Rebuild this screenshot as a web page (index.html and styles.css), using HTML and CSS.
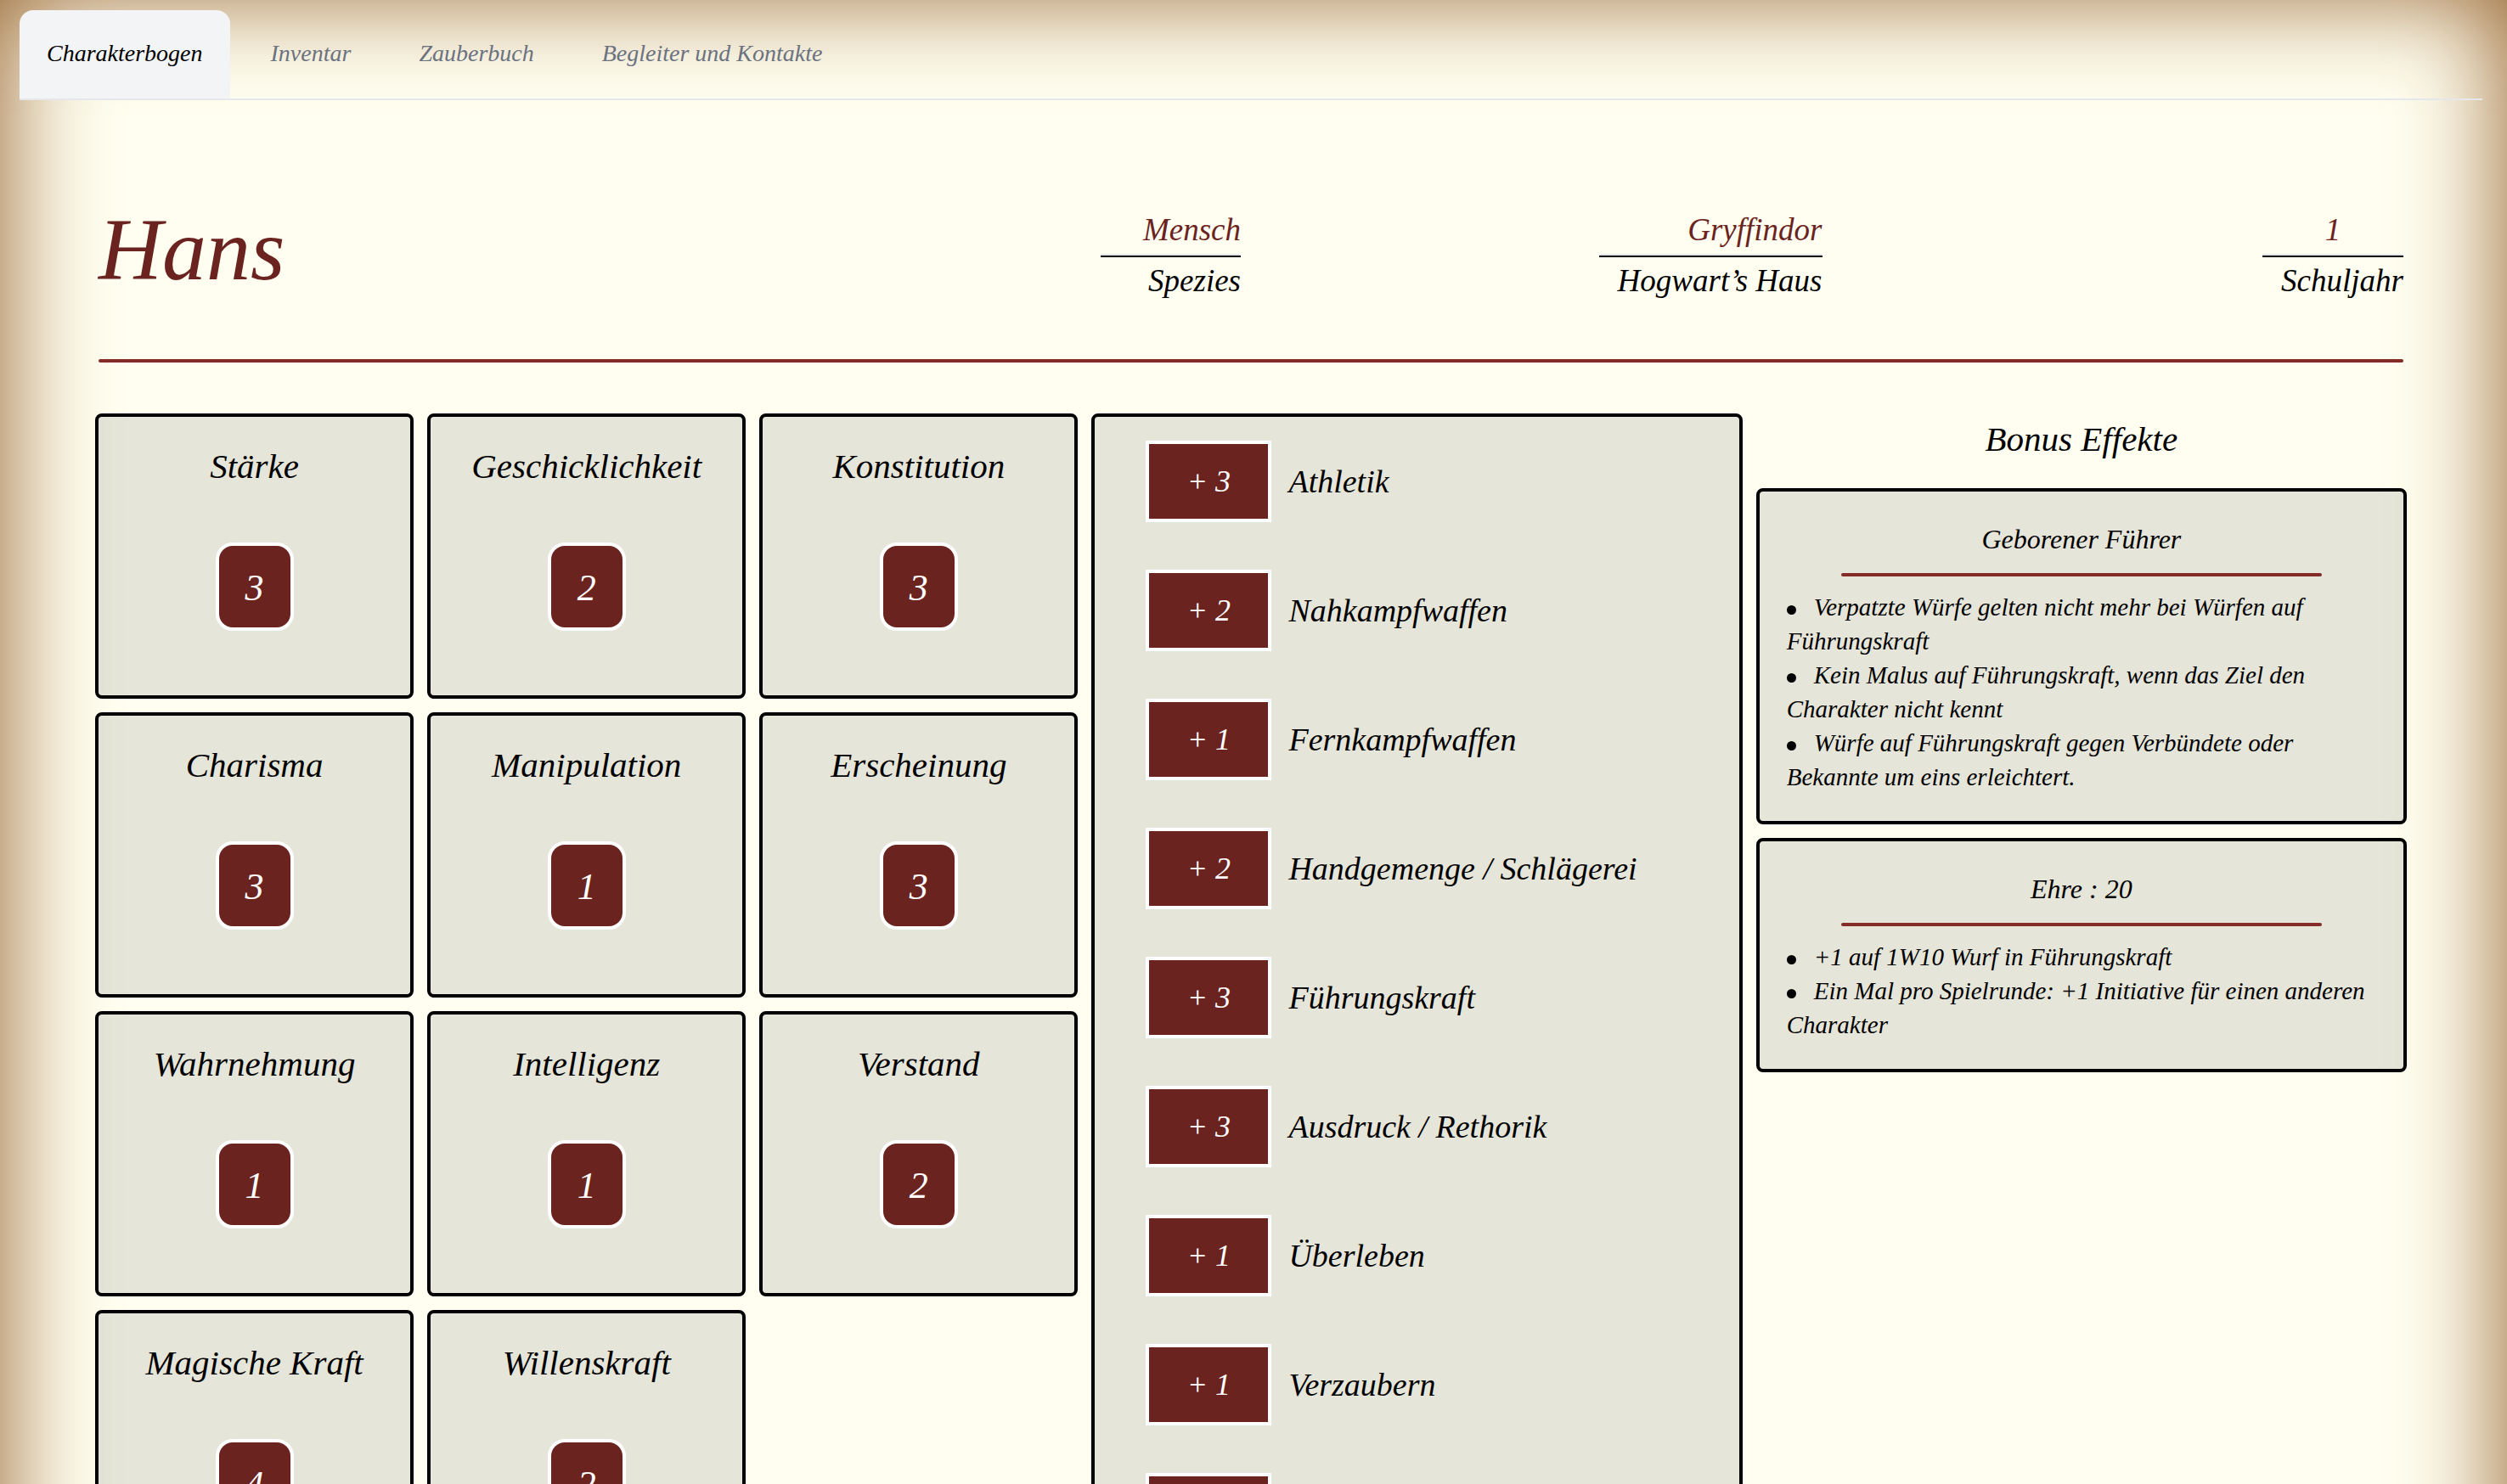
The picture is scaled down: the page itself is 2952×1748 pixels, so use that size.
FILE: index.html
```html
<!DOCTYPE html>
<html lang="de">
<head>
<meta charset="utf-8">
<meta name="viewport" content="width=device-width, initial-scale=1">
<title>Charakterbogen – Hans</title>
<link rel="stylesheet" href="styles.css">
</head>
<body>
<div class="parchment">
  <nav class="tabs">
    <a class="tab tab-active" href="#charakterbogen" aria-current="page">Charakterbogen</a>
    <a class="tab" href="#inventar">Inventar</a>
    <a class="tab" href="#zauberbuch">Zauberbuch</a>
    <a class="tab" href="#kontakte">Begleiter und Kontakte</a>
  </nav>
  <main class="sheet">
    <header class="profile">
      <h1 class="name">Hans</h1>
      <div class="fact"><span class="fact-value">Mensch</span><span class="fact-label">Spezies</span></div>
      <div class="fact"><span class="fact-value">Gryffindor</span><span class="fact-label">Hogwart’s Haus</span></div>
      <div class="fact"><span class="fact-value fact-number">1</span><span class="fact-label">Schuljahr</span></div>
    </header>
    <hr class="rule">
    <div class="columns">
      <section class="attributes">
        <article class="card attribute"><h2 class="attribute-name">Stärke</h2><span class="attribute-value">3</span></article>
        <article class="card attribute"><h2 class="attribute-name">Geschicklichkeit</h2><span class="attribute-value">2</span></article>
        <article class="card attribute"><h2 class="attribute-name">Konstitution</h2><span class="attribute-value">3</span></article>
        <article class="card attribute"><h2 class="attribute-name">Charisma</h2><span class="attribute-value">3</span></article>
        <article class="card attribute"><h2 class="attribute-name">Manipulation</h2><span class="attribute-value">1</span></article>
        <article class="card attribute"><h2 class="attribute-name">Erscheinung</h2><span class="attribute-value">3</span></article>
        <article class="card attribute"><h2 class="attribute-name">Wahrnehmung</h2><span class="attribute-value">1</span></article>
        <article class="card attribute"><h2 class="attribute-name">Intelligenz</h2><span class="attribute-value">1</span></article>
        <article class="card attribute"><h2 class="attribute-name">Verstand</h2><span class="attribute-value">2</span></article>
        <article class="card attribute"><h2 class="attribute-name">Magische Kraft</h2><span class="attribute-value">4</span></article>
        <article class="card attribute"><h2 class="attribute-name">Willenskraft</h2><span class="attribute-value">2</span></article>
      </section>
      <ul class="card skills">
        <li class="skill"><span class="skill-value">+ 3</span>Athletik</li>
        <li class="skill"><span class="skill-value">+ 2</span>Nahkampfwaffen</li>
        <li class="skill"><span class="skill-value">+ 1</span>Fernkampfwaffen</li>
        <li class="skill"><span class="skill-value">+ 2</span>Handgemenge / Schlägerei</li>
        <li class="skill"><span class="skill-value">+ 3</span>Führungskraft</li>
        <li class="skill"><span class="skill-value">+ 3</span>Ausdruck / Rethorik</li>
        <li class="skill"><span class="skill-value">+ 1</span>Überleben</li>
        <li class="skill"><span class="skill-value">+ 1</span>Verzaubern</li>
        <li class="skill"><span class="skill-value"></span></li>
      </ul>
      <section class="effects">
        <h2 class="effects-title">Bonus Effekte</h2>
        <article class="card effect">
          <h3 class="effect-name">Geborener Führer</h3>
          <hr class="rule effect-rule">
          <ul class="effect-list">
            <li>Verpatzte Würfe gelten nicht mehr bei Würfen auf Führungskraft</li>
            <li>Kein Malus auf Führungskraft, wenn das Ziel den Charakter nicht kennt</li>
            <li>Würfe auf Führungskraft gegen Verbündete oder Bekannte um eins erleichtert.</li>
          </ul>
        </article>
        <article class="card effect">
          <h3 class="effect-name">Ehre : 20</h3>
          <hr class="rule effect-rule">
          <ul class="effect-list">
            <li>+1 auf 1W10 Wurf in Führungskraft</li>
            <li>Ein Mal pro Spielrunde: +1 Initiative für einen anderen Charakter</li>
          </ul>
        </article>
      </section>
    </div>
  </main>
</div>
</body>
</html>
```

FILE: styles.css
```css
*,
*::before {
  box-sizing: border-box;
}

body {
  margin: 0;
  background: #fffef0;
  color: #000;
  font-family: "Apple Chancery", "Z003", "URW Chancery L", "Liberation Serif", cursive;
  font-style: italic;
  font-size: 36px;
}

h1,
h2,
h3,
ul {
  margin: 0;
  padding: 0;
  font-weight: normal;
}

.parchment {
  min-height: 100vh;
  padding: 12px 29px 160px 23px;
  box-shadow: inset 0 -12px 125px #8f5922;
}

.tabs {
  display: flex;
  gap: 16px;
  border-bottom: 2px solid #e5e7eb;
}

.tab {
  padding: 31px 32px 33px;
  border-radius: 16px 16px 0 0;
  color: #6b7280;
  font-size: 28px;
  line-height: 40px;
  text-decoration: none;
}

.tab-active {
  background: #f3f4f6;
  color: #000;
}

.sheet {
  padding: 88px 89px 0;
}

.profile {
  display: grid;
  grid-template-columns: repeat(4, 1fr);
  gap: 24px;
  align-items: center;
  padding: 0 4px;
}

.name {
  color: #6b2320;
  font-size: 104px;
  line-height: 176px;
}

.fact {
  display: flex;
  flex-direction: column;
  justify-self: end;
  min-width: 165px;
  padding-top: 14px;
  font-size: 37px;
  line-height: 56px;
  text-align: right;
}

.fact-value {
  padding-left: 22px;
  border-bottom: 2px solid #e5e7eb;
  color: #6b2320;
}

.fact-number {
  padding-left: 0;
  text-align: center;
}

.fact-label {
  padding-left: 22px;
  border-top: 2px solid #000;
}

.rule {
  height: 4px;
  margin: 41px 4px 60px;
  border: 0;
  border-radius: 2px;
  background: #842c28;
}

.columns {
  display: grid;
  grid-template-columns: repeat(7, 1fr);
  gap: 16px;
}

.card {
  border: 4px solid #000;
  border-radius: 8px;
  background: rgba(17, 24, 39, 0.11);
}

.attributes {
  grid-column: span 3;
  display: grid;
  grid-template-columns: repeat(3, 1fr);
  gap: 16px;
  align-content: start;
}

.attribute {
  display: flex;
  flex-direction: column;
  align-items: center;
  gap: 64px;
  padding: 32px 16px 76px;
}

.attribute-name {
  font-size: 41px;
  line-height: 52px;
}

.attribute-value {
  width: 92px;
  padding-top: 4px;
  border: 4px solid #fff;
  border-radius: 20px;
  background: #6b2320;
  color: #fff;
  font-size: 44px;
  line-height: 92px;
  text-align: center;
}

.skills {
  grid-column: span 2;
  display: flex;
  flex-direction: column;
  gap: 56px;
  padding: 28px 60px;
  font-size: 38px;
  list-style: none;
}

.skill {
  display: flex;
  align-items: center;
  gap: 20px;
}

.skill-value {
  width: 148px;
  height: 96px;
  border: 4px solid #fff;
  background: #6b2320;
  color: #fff;
  font-size: 36px;
  line-height: 88px;
  text-align: center;
}

.effects {
  grid-column: span 2;
  display: flex;
  flex-direction: column;
  gap: 16px;
}

.effects-title {
  padding: 2px 0 14px;
  font-size: 41px;
  line-height: 56px;
  text-align: center;
}

.effect {
  padding: 32px;
}

.effect-name {
  font-size: 32px;
  line-height: 48px;
  text-align: center;
}

.effect-rule {
  margin: 16px 64px;
}

.effect-list {
  font-size: 29px;
  line-height: 40px;
  list-style: none;
}

.effect-list li::before {
  content: "";
  display: inline-block;
  width: 11px;
  height: 11px;
  margin-right: 21px;
  border-radius: 50%;
  background: #000;
  vertical-align: middle;
}
```
